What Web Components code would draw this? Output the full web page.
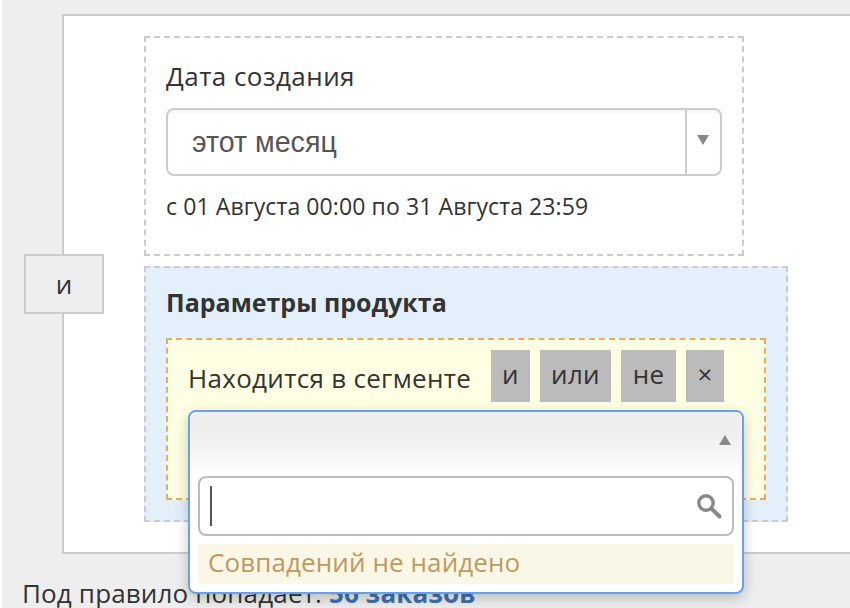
<!DOCTYPE html>
<html lang="ru"><head><meta charset="utf-8"><title>Правило</title>
<style>
html{background:#fff}
body{margin:0 0 0 2px;height:608px;overflow:hidden;background:#eee;font-family:"Open Sans",sans-serif;color:#333}
</style></head><body>
<rule-page></rule-page>
<script>
function def(name, css, html){
  customElements.define(name, class extends HTMLElement{
    constructor(){super();this.attachShadow({mode:'open'}).innerHTML='<style>'+css+'</style>'+html;}
  });
}
def('date-select',`
:host{display:flex;height:68px;box-sizing:border-box;border:2px solid #ccc;border-radius:8px;background:#fff;box-shadow:inset 0 2px 3px #f4f4f4}
.v{flex:1;padding-left:24px;font:28.6px/64px "Liberation Sans",sans-serif;color:#555}
.a{width:32px;padding-right:1px;border-left:2px solid #ccc;display:flex;align-items:center;justify-content:center;padding-bottom:4px}
`,`<div class="v"><slot></slot></div><div class="a"><svg width="12" height="10" viewBox="0 0 12 10"><path d="M0 0H12L6 10Z" fill="#888"/></svg></div>`);
def('date-filter',`
:host{display:block;box-sizing:border-box;width:600px;height:220px;border:2px dashed #ccc;padding:20px 20px 0}
.l{font-size:26px;letter-spacing:.45px;line-height:36px;height:50px;color:#333}
.n{font-size:23px;letter-spacing:.1px;line-height:36px;margin-top:12px;color:#333}
`,`<div class="l">Дата создания</div><date-select>этот месяц</date-select><div class="n">с 01 Августа 00:00 по 31 Августа 23:59</div>`);
def('op-button',`
:host{display:flex;align-items:center;justify-content:center;height:52px;box-sizing:border-box;padding-bottom:4px;background:#bbb;color:#333;font-size:26px;letter-spacing:.3px}
`,`<slot></slot>`);
def('search-box',`
:host{display:flex;align-items:center;justify-content:space-between;box-sizing:border-box;height:60px;border:2px solid #bbb;border-radius:8px;background:#fff;padding:0 10px}
.c{width:2px;height:40px;background:#555}
`,`<div class="c"></div><svg width="26" height="26" viewBox="0 0 26 26"><circle cx="10" cy="10" r="7.2" fill="none" stroke="#888" stroke-width="3.4"/><path d="M15.5 15.5L23.5 23.5" stroke="#888" stroke-width="4" stroke-linecap="round"/></svg>`);
def('segment-dropdown',`
:host{position:absolute;left:20px;top:70px;width:556px;height:184px;box-sizing:border-box;border:2px solid #6d9eeb;border-radius:8px;background:#fff;box-shadow:0 4px 14px rgba(0,0,0,.22);display:block;z-index:2}
.h{height:64px;background:linear-gradient(#eee 30%,#fff 100%);border-radius:6px 6px 0 0;display:flex;justify-content:flex-end;align-items:flex-start;padding:23px 11px 0 0;box-sizing:border-box}
.b{padding:0 8px}
.m{margin-top:8px;height:40px;background:#faf7e6;color:#bf9a5e;font-size:26px;letter-spacing:.1px;line-height:36px;padding-left:10px}
`,`<div class="h"><svg width="12" height="10" viewBox="0 0 12 10"><path d="M0 10H12L6 0Z" fill="#888"/></svg></div><div class="b"><search-box></search-box><div class="m">Совпадений не найдено</div></div>`);
def('segment-condition',`
:host{display:block;position:relative;box-sizing:border-box;width:600px;height:162px;border:2px dashed #e8ad5a;background:#ffffe3;padding:10px 0 0 20px}
.r{display:flex}
.t{font-size:26px;letter-spacing:.3px;line-height:52px;width:282px;white-space:nowrap;color:#333;margin-right:21px;padding-top:2px}
op-button{margin-right:10px}
`,`<div class="r"><div class="t">Находится в сегменте</div><op-button style="width:39px">и</op-button><op-button style="width:71px">или</op-button><op-button style="width:55px">не</op-button><op-button style="width:38px">×</op-button></div><segment-dropdown></segment-dropdown>`);
def('product-group',`
:host{display:block;box-sizing:border-box;width:644px;height:256px;margin-top:10px;border:2px dashed #ccc;background:#e3f0fc;padding:20px 20px 0}
.t{font-weight:700;font-size:25px;line-height:28px;height:50px;color:#333}
`,`<div class="t">Параметры продукта</div><segment-condition></segment-condition>`);
def('logic-tag',`
:host{position:absolute;left:-40px;top:238px;width:80px;height:60px;box-sizing:border-box;border:2px solid #ccc;background:#eee;display:flex;align-items:center;justify-content:center;font-size:26px;color:#333}
`,`<slot></slot>`);
def('rule-panel',`
:host{display:block;position:relative;box-sizing:border-box;margin:14px -10px 0 60px;height:540px;border:2px solid #ccc;background:#fff;padding:20px 0 0 80px}
`,`<logic-tag>и</logic-tag><date-filter></date-filter><product-group></product-group>`);
def('rule-summary',`
:host{display:block;margin:19px 0 0 20px;font-size:26px;letter-spacing:.15px;line-height:40px;color:#333;white-space:nowrap}
b{color:#3d72b0}
`,`Под правило попадает: <b>56 заказов</b>`);
def('rule-page',`
:host{display:block;height:608px;overflow:hidden}
`,`<rule-panel></rule-panel><rule-summary></rule-summary>`);
</script>
</body></html>
